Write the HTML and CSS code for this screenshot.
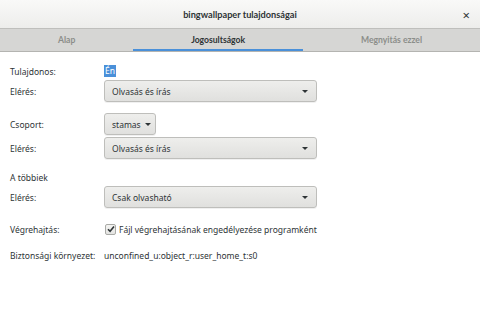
FILE: index.html
```html
<!DOCTYPE html>
<html lang="hu">
<head>
<meta charset="utf-8">
<title>bingwallpaper tulajdonságai</title>
<link rel="stylesheet" href="styles.css">
</head>
<body>
<div class="window">
  <header class="titlebar">
    <span class="title">bingwallpaper tulajdonságai</span>
    <span class="close">×</span>
  </header>
  <nav class="tabs">
    <div class="tab">Alap</div>
    <div class="tab active">Jogosultságok</div>
    <div class="tab">Megnyitás ezzel</div>
  </nav>
  <main class="content">
    <section class="group">
      <div class="row short">
        <span class="label">Tulajdonos:</span>
        <span class="selected">Én</span>
      </div>
      <div class="row">
        <span class="label">Elérés:</span>
        <div class="combo"><span>Olvasás és írás</span><span class="arrow"></span></div>
      </div>
    </section>
    <section class="group">
      <div class="row">
        <span class="label">Csoport:</span>
        <div class="button"><span>stamas</span><span class="arrow"></span></div>
      </div>
      <div class="row">
        <span class="label">Elérés:</span>
        <div class="combo"><span>Olvasás és írás</span><span class="arrow"></span></div>
      </div>
    </section>
    <section class="group">
      <div class="row short">
        <span class="label">A többiek</span>
      </div>
      <div class="row">
        <span class="label">Elérés:</span>
        <div class="combo"><span>Csak olvasható</span><span class="arrow"></span></div>
      </div>
    </section>
    <section class="group exec">
      <div class="row short">
        <span class="label">Végrehajtás:</span>
        <span class="check">
          <span class="box"><svg width="8" height="8" viewBox="0 0 8 8"><path d="M1 4.2 L3.1 6.3 L7 1.6" fill="none" stroke="#2e3436" stroke-width="1.6"/></svg></span>
          Fájl végrehajtásának engedélyezése programként
        </span>
      </div>
    </section>
    <section class="group context">
      <div class="row short">
        <span class="label">Biztonsági környezet:</span>
        <span>unconfined_u:object_r:user_home_t:s0</span>
      </div>
    </section>
  </main>
</div>
</body>
</html>
```
FILE: styles.css
```css
* { box-sizing: border-box; }
html, body {
  margin: 0;
  padding: 0;
  background: #ffffff;
}
body {
  font-family: "Noto Sans", "DejaVu Sans", sans-serif;
  font-size: 8.5px;
  color: #2e3436;
}
.window {
  width: 480px;
  height: 332px;
  background: #ffffff;
  display: flex;
  flex-direction: column;
}
.titlebar {
  height: 29px;
  background: linear-gradient(#f9f9f8, #ededeb);
  border-bottom: 1px solid #bfbfbc;
  display: flex;
  align-items: center;
  justify-content: center;
  position: relative;
}
.title {
  font-family: Lato, "Noto Sans", sans-serif;
  font-weight: bold;
  font-size: 9.2px;
  color: #2e3436;
}
.close {
  position: absolute;
  right: 10px;
  top: 6px;
  font-size: 13px;
  color: #2e3436;
}
.tabs {
  height: 23px;
  background: #d6d6d4;
  border-bottom: 1px solid #b4b4b1;
  display: flex;
}
.tab {
  flex: 1 1 auto;
  display: flex;
  align-items: center;
  justify-content: center;
  color: #8c8e8a;
  font-family: Lato, "Noto Sans", sans-serif;
  font-weight: bold;
  font-size: 8.6px;
  white-space: nowrap;
}
.tab.active {
  color: #2e3436;
  box-shadow: inset 0 -2px 0 #4a90d9;
}
.content {
  padding: 12px 0 0 10px;
  display: flex;
  flex-direction: column;
  gap: 11px;
}
.group {
  display: flex;
  flex-direction: column;
  gap: 2px;
}
.group.exec { margin-top: 3px; }
.group.context { margin-top: 1px; }
.row {
  height: 22px;
  display: flex;
  align-items: center;
}
.row.short { height: 14px; }
.label {
  width: 94px;
  flex: none;
  white-space: nowrap;
}
.selected {
  background: #4a90d9;
  color: #ffffff;
  padding: 0 1px;
  line-height: 12px;
}
.combo, .button {
  height: 22px;
  border: 1px solid #bebebb;
  border-radius: 3px;
  background: linear-gradient(#eeeeec, #e0e0de);
  box-shadow: 0 1px 0 rgba(0,0,0,0.06);
  display: flex;
  align-items: center;
  padding: 0 8px 0 7px;
}
.combo {
  width: 213px;
  justify-content: space-between;
}
.button {
  width: 52px;
  gap: 4px;
  padding: 0 6px 0 7px;
}
.arrow {
  width: 0;
  height: 0;
  border-left: 3px solid transparent;
  border-right: 3px solid transparent;
  border-top: 3px solid #2e3436;
}
.check {
  display: flex;
  align-items: center;
  gap: 3px;
  white-space: nowrap;
  margin-left: 1px;
}
.box {
  width: 11px;
  height: 11px;
  border: 1px solid #a9aaa6;
  border-radius: 2px;
  background: linear-gradient(#f4f4f2, #e4e4e2);
  display: flex;
  align-items: center;
  justify-content: center;
}
```
